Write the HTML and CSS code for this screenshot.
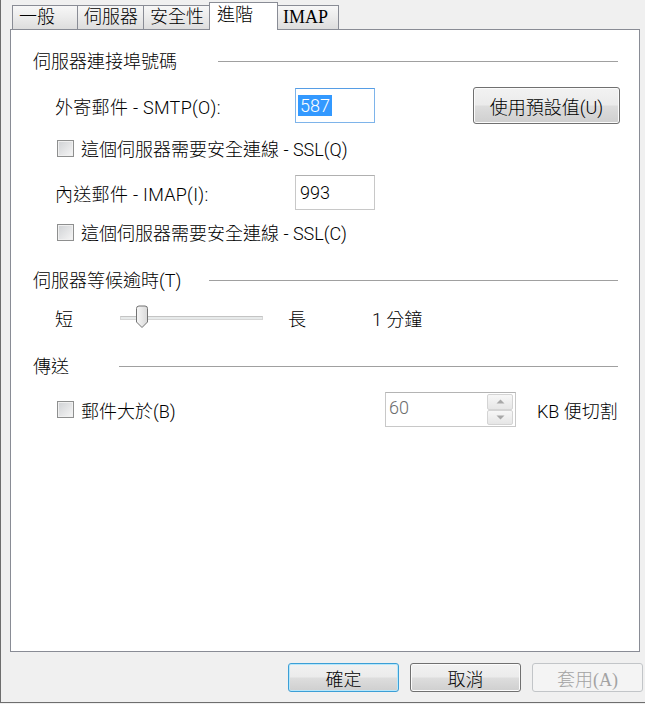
FILE: index.html
```html
<!DOCTYPE html>
<html lang="zh-Hant">
<head>
    <meta charset="UTF-8">
    <title>進階</title>
    <link rel="stylesheet" href="styles.css">
</head>
<body>
    <div class="window">
        <div class="tabs">
            <div class="tab">一般</div>
            <div class="tab">伺服器</div>
            <div class="tab">安全性</div>
            <div class="tab tab-active">進階</div>
            <div class="tab tab-imap">IMAP</div>
        </div>

        <div class="panel">
            <div class="group-title"><span class="title-ports">伺服器連接埠號碼</span></div>

            <div class="row row-port">
                <span class="field-label">外寄郵件 - SMTP(O):</span>
                <div class="textbox textbox-focus"><span class="selection">587</span></div>
                <button class="btn btn-defaults">使用預設值(U)</button>
            </div>

            <div class="row row-check row-check-first">
                <span class="checkbox"></span>
                <span class="check-label">這個伺服器需要安全連線 - SSL(Q)</span>
            </div>

            <div class="row row-port row-imap">
                <span class="field-label">內送郵件 - IMAP(I):</span>
                <div class="textbox">993</div>
            </div>

            <div class="row row-check row-check-second">
                <span class="checkbox"></span>
                <span class="check-label">這個伺服器需要安全連線 - SSL(C)</span>
            </div>

            <div class="group-title group-timeout"><span class="title-timeout">伺服器等候逾時(T)</span></div>

            <div class="row row-slider">
                <span>短</span>
                <div class="track">
                    <svg class="thumb" width="14" height="24" viewBox="0 0 14 24">
                        <defs>
                            <linearGradient id="thumbFill" x1="0" y1="0" x2="1" y2="0">
                                <stop offset="0" stop-color="#f7f7f7"/>
                                <stop offset="1" stop-color="#d9d9d9"/>
                            </linearGradient>
                        </defs>
                        <path d="M1.5 3.5 Q1.5 1 4 1 H10 Q12.5 1 12.5 3.5 V17 L7 22.5 L1.5 17 Z" fill="url(#thumbFill)" stroke="#737373" stroke-width="1"/>
                    </svg>
                </div>
                <span class="slider-long">長</span>
                <span class="slider-value">1 分鐘</span>
            </div>

            <div class="group-title group-send"><span class="title-send">傳送</span></div>

            <div class="row row-split">
                <div class="split-check">
                    <span class="checkbox"></span>
                    <span class="check-label">郵件大於(B)</span>
                </div>
                <div class="spinbox">
                    <span class="spin-value">60</span>
                    <div class="spin-buttons">
                        <span class="spin-btn"><svg width="9" height="5" viewBox="0 0 9 5"><path d="M0.5 4.5 L4.5 0.5 L8.5 4.5 Z" fill="#a8a8a8"/></svg></span>
                        <span class="spin-btn"><svg width="9" height="5" viewBox="0 0 9 5"><path d="M0.5 0.5 L4.5 4.5 L8.5 0.5 Z" fill="#a8a8a8"/></svg></span>
                    </div>
                </div>
                <span class="split-unit">KB 便切割</span>
            </div>
        </div>

        <div class="footer">
            <button class="btn btn-footer btn-primary">確定</button>
            <button class="btn btn-footer">取消</button>
            <button class="btn btn-footer btn-disabled">套用(A)</button>
        </div>
    </div>
</body>
</html>
```

FILE: styles.css
```css
body {
    margin: 0;
    background: #f0f0f0;
    font-family: Roboto, "Noto Sans CJK TC", sans-serif;
    font-size: 18px;
    font-weight: 300;
    color: #000;
}

.window {
    width: 645px;
    height: 703px;
    box-sizing: border-box;
    border-left: 1px solid #6e6e6e;
    border-bottom: 1px solid #6e6e6e;
    display: flex;
    flex-direction: column;
}

/* tab strip */
.tabs {
    display: flex;
    align-items: flex-end;
    height: 29px;
    padding-left: 11px;
}

.tab {
    box-sizing: border-box;
    height: 24px;
    min-width: 66px;
    padding: 0 5px 0 6px;
    margin-right: -1px;
    border: 1px solid #898c95;
    border-bottom: none;
    background: linear-gradient(#f7f7f7, #ebebeb 50%, #dddddd);
    line-height: 22px;
    white-space: nowrap;
}

.tab-active {
    position: relative;
    z-index: 1;
    height: 28px;
    min-width: 69px;
    margin-bottom: -1px;
    padding-left: 7px;
    background: #fff;
    line-height: 24px;
}

.tab-imap {
    min-width: 62px;
    padding-left: 5px;
    font-family: "Liberation Serif", serif;
}

/* page */
.panel {
    margin-left: 9px;
    width: 630px;
    height: 623px;
    box-sizing: border-box;
    border: 1px solid #898c95;
    background: #fff;
    padding: 0 21px 0 22px;
    display: flex;
    flex-direction: column;
}

.group-title {
    display: flex;
    align-items: center;
    height: 24px;
    margin-top: 20px;
    line-height: 24px;
}

.group-title::after {
    content: "";
    flex: 1;
    height: 1px;
    background: #a0a0a0;
    margin-top: -1px;
}

.title-ports { width: 185px; }
.title-timeout { width: 176px; }
.title-send { width: 86px; }

.group-timeout { margin-top: 25px; }
.group-send { margin-top: 25px; }

.row {
    display: flex;
    align-items: center;
    padding-left: 22px;
}

.row-port {
    height: 37px;
    margin-top: 13px;
}

.row-imap {
    height: 35px;
    margin-top: 15px;
}

.field-label {
    width: 240px;
    flex-shrink: 0;
    letter-spacing: 0.3px;
}

.textbox {
    box-sizing: border-box;
    width: 80px;
    height: 35px;
    padding: 6px 0 0 4px;
    border: 1px solid #c8c8c8;
    border-top-color: #b0b0b0;
    line-height: 22px;
}

.textbox-focus {
    border-color: #7eb4ea;
    border-top-color: #569de5;
    padding-left: 2px;
}

.selection {
    display: inline-block;
    background: #3399ff;
    color: #fff;
    padding: 0 2px;
    line-height: 21px;
}

.btn {
    box-sizing: border-box;
    border: 1px solid #707070;
    border-radius: 3px;
    background: linear-gradient(#f2f2f2 0%, #ebebeb 48%, #dddddd 52%, #cfcfcf 100%);
    box-shadow: inset 0 0 0 1px #fbfbfb;
    font-family: inherit;
    font-size: 18px;
    font-weight: 300;
    color: #000;
    padding: 0;
}

.btn-defaults {
    width: 147px;
    height: 37px;
    margin-left: auto;
    margin-right: -2px;
}

.row-check {
    height: 24px;
    padding-left: 24px;
}

.row-check-first { margin-top: 12px; }
.row-check-second { margin-top: 10px; }

.checkbox {
    box-sizing: border-box;
    width: 17px;
    height: 17px;
    flex-shrink: 0;
    border: 1px solid #8e8f8f;
    background: linear-gradient(135deg, #cfd1d4, #f6f6f6);
    box-shadow: inset 0 0 0 1px #f0f0f0;
}

.check-label {
    margin-left: 7px;
}

/* timeout slider */
.row-slider {
    height: 24px;
    margin-top: 13px;
}

.track {
    position: relative;
    width: 143px;
    height: 4px;
    margin-left: 47px;
    box-sizing: border-box;
    border: 1px solid #d6d6d6;
    border-top-color: #c4c4c4;
    background: #e7eaea;
}

.thumb {
    position: absolute;
    left: 14px;
    top: -12px;
}

.slider-long { margin-left: 25px; }
.slider-value { margin-left: 66px; }

/* split messages */
.row-split {
    height: 35px;
    margin-top: 13px;
}

.split-check {
    display: flex;
    align-items: center;
    width: 328px;
    flex-shrink: 0;
    padding-left: 2px;
}

.spinbox {
    box-sizing: border-box;
    width: 131px;
    height: 35px;
    flex-shrink: 0;
    border: 1px solid #c8c8c8;
    border-top-color: #b4b4b4;
    display: flex;
    align-items: stretch;
    padding: 1px 2px 1px 0;
}

.spin-value {
    flex: 1;
    padding: 3px 0 0 3px;
    color: #6d6d6d;
    line-height: 22px;
}

.spin-buttons {
    display: flex;
    flex-direction: column;
    width: 26px;
}

.spin-btn {
    flex: 1;
    box-sizing: border-box;
    border: 1px solid #d4d4d4;
    border-radius: 2px;
    background: linear-gradient(#f7f7f7, #e6e6e6);
    display: flex;
    align-items: center;
    justify-content: center;
}

.split-unit {
    margin-left: 21px;
    white-space: nowrap;
}

/* dialog buttons */
.footer {
    display: flex;
    justify-content: flex-end;
    gap: 11px;
    margin-top: 11px;
    padding-right: 2px;
}

.btn-footer {
    width: 111px;
    height: 29px;
    font-family: "Liberation Serif", "Noto Sans CJK TC", serif;
}

.btn-primary {
    border-color: #3c9fd6;
    box-shadow: inset 0 0 0 1px #b7e7fb;
}

.btn-disabled {
    border-color: #c2c5c8;
    background: #f4f4f4;
    box-shadow: none;
    color: #a3a3a3;
}
```
